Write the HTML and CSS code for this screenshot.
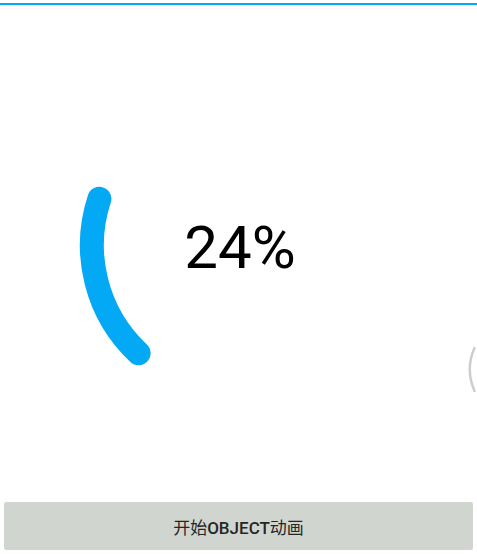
FILE: index.html
```html
<!DOCTYPE html>
<html lang="zh">
<head>
<meta charset="utf-8">
<title>Object Animation</title>
<link rel="stylesheet" href="styles.css">
</head>
<body>
<div class="page">
  <div class="topline"></div>
  <div class="stage">
    <svg class="canvas" viewBox="0 0 477 497" width="477" height="497" xmlns="http://www.w3.org/2000/svg">
      <path class="arc" d="M 138.6 348.2 A 148 148 0 0 1 99.4 193.8"/>
      <path class="ghost" d="M 474.5 343 Q 465 364 474.5 386"/>
      <text class="percent" x="240" y="263">24%</text>
    </svg>
  </div>
  <button class="action"><span class="cjk">开始</span>OBJECT<span class="cjk">动画</span></button>
</div>
</body>
</html>
```
FILE: styles.css
```css
html, body {
  margin: 0;
  padding: 0;
  background: #ffffff;
}
.page {
  width: 477px;
  height: 554px;
  display: flex;
  flex-direction: column;
  overflow: hidden;
}
.topline {
  margin-top: 3px;
  height: 2px;
  background: #03a9f4;
  flex: none;
}
.stage {
  flex: 1;
  display: flex;
}
.canvas {
  display: block;
}
.arc {
  fill: none;
  stroke: #03a9f4;
  stroke-width: 24;
  stroke-linecap: round;
}
.ghost {
  fill: none;
  stroke: #c9cfcd;
  stroke-width: 2.5;
  stroke-linecap: round;
}
.percent {
  font-family: Roboto, "Liberation Sans", sans-serif;
  font-size: 60px;
  fill: #000000;
  text-anchor: middle;
}
.action {
  flex: none;
  margin: 0 4px 4px 4px;
  height: 48px;
  border: none;
  border-radius: 2px;
  background: #d1d5cf;
  color: #262626;
  font-family: Roboto, "Noto Sans CJK SC", sans-serif;
  font-weight: 500;
  font-size: 17px;
  padding: 0;
}
.cjk {
  font-weight: 400;
}
```
